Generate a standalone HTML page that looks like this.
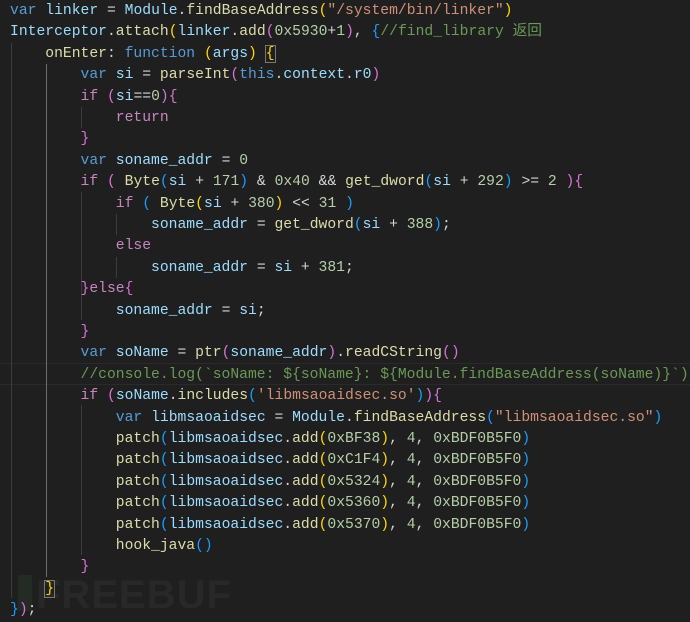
<!DOCTYPE html>
<html><head><meta charset="utf-8"><style>
html,body{margin:0;padding:0;}
body{width:690px;height:618px;background:#1f1f1f;overflow:hidden;position:relative;
font-family:"Liberation Mono","Noto Sans CJK SC",monospace;font-size:14.7px;color:#d4d4d4;}
.l{position:absolute;left:10px;height:21.4px;line-height:21.4px;white-space:pre;margin-top:1px}
.k{color:#569cd6}.c{color:#c586c0}.v{color:#9cdcfe}.f{color:#dcdcaa}.s{color:#ce9178}
.n{color:#b5cea8}.g{color:#6a9955}.y{color:#ffd700}.p{color:#da70d6}.b{color:#179fff}.w{color:#d4d4d4}
.ig{position:absolute;width:1px;background:#3c3c3c}
</style></head><body>
<div style="position:absolute;left:0;top:363px;width:690px;height:20px;border-top:1px solid #2a2a2a;border-bottom:1px solid #2a2a2a"></div>
<div style="position:absolute;left:36px;top:575px;font-family:'Liberation Sans',sans-serif;font-weight:bold;font-size:40px;color:#282828;letter-spacing:1px;line-height:40px">FREEBUF</div>
<div style="position:absolute;left:18px;top:575px;width:14px;height:36px;background:#242b24"></div>
<div class="ig" style="left:11px;top:43px;height:555px"></div>
<div class="ig" style="left:46px;top:64px;height:513px;background:#6e6e6e"></div>
<div class="ig" style="left:81px;top:107px;height:21px"></div>
<div class="ig" style="left:81px;top:192px;height:107px"></div>
<div class="ig" style="left:116px;top:214px;height:21px"></div>
<div class="ig" style="left:116px;top:257px;height:21px"></div>
<div class="ig" style="left:81px;top:299px;height:21px"></div>
<div class="ig" style="left:81px;top:405px;height:150px"></div>
<div class="l" style="top:0px"><span class="k">var</span> <span class="v">linker</span> = <span class="v">Module</span>.<span class="f">findBaseAddress</span><span class="y">(</span><span class="s">"/system/bin/linker"</span><span class="y">)</span></div>
<div class="l" style="top:21.4px"><span class="v">Interceptor</span>.<span class="f">attach</span><span class="y">(</span><span class="v">linker</span>.<span class="f">add</span><span class="p">(</span><span class="n">0x5930</span>+<span class="n">1</span><span class="p">)</span>, <span class="b">{</span><span class="g">//find_library 返回</span></div>
<div class="l" style="top:42.8px">    <span class="f">onEnter</span>: <span class="k">function</span> <span class="y">(</span><span class="v">args</span><span class="y">)</span> <span class="y" style="outline:1px solid #777">{</span></div>
<div class="l" style="top:64.2px">        <span class="k">var</span> <span class="v">si</span> = <span class="f">parseInt</span><span class="p">(</span><span class="k">this</span>.<span class="v">context</span>.<span class="v">r0</span><span class="p">)</span></div>
<div class="l" style="top:85.6px">        <span class="c">if</span> <span class="p">(</span><span class="v">si</span>==<span class="n">0</span><span class="p">){</span></div>
<div class="l" style="top:107px">            <span class="c">return</span></div>
<div class="l" style="top:128.4px">        <span class="p">}</span></div>
<div class="l" style="top:149.8px">        <span class="k">var</span> <span class="v">soname_addr</span> = <span class="n">0</span></div>
<div class="l" style="top:171.2px">        <span class="c">if</span> <span class="p">(</span> <span class="f">Byte</span><span class="b">(</span><span class="v">si</span> + <span class="n">171</span><span class="b">)</span> &amp; <span class="n">0x40</span> &amp;&amp; <span class="f">get_dword</span><span class="b">(</span><span class="v">si</span> + <span class="n">292</span><span class="b">)</span> &gt;= <span class="n">2</span> <span class="p">){</span></div>
<div class="l" style="top:192.6px">            <span class="c">if</span> <span class="b">(</span> <span class="f">Byte</span><span class="y">(</span><span class="v">si</span> + <span class="n">380</span><span class="y">)</span> &lt;&lt; <span class="n">31</span> <span class="b">)</span></div>
<div class="l" style="top:214px">                <span class="v">soname_addr</span> = <span class="f">get_dword</span><span class="b">(</span><span class="v">si</span> + <span class="n">388</span><span class="b">)</span>;</div>
<div class="l" style="top:235.4px">            <span class="c">else</span></div>
<div class="l" style="top:256.8px">                <span class="v">soname_addr</span> = <span class="v">si</span> + <span class="n">381</span>;</div>
<div class="l" style="top:278.2px">        <span class="p">}</span><span class="c">else</span><span class="p">{</span></div>
<div class="l" style="top:299.6px">            <span class="v">soname_addr</span> = <span class="v">si</span>;</div>
<div class="l" style="top:321px">        <span class="p">}</span></div>
<div class="l" style="top:342.4px">        <span class="k">var</span> <span class="v">soName</span> = <span class="f">ptr</span><span class="p">(</span><span class="v">soname_addr</span><span class="p">)</span>.<span class="f">readCString</span><span class="p">()</span></div>
<div class="l" style="top:363.8px">        <span class="g">//console.log(`soName: ${soName}: ${Module.findBaseAddress(soName)}`)</span></div>
<div class="l" style="top:385.2px">        <span class="c">if</span> <span class="p">(</span><span class="v">soName</span>.<span class="f">includes</span><span class="b">(</span><span class="s">'libmsaoaidsec.so'</span><span class="b">)</span><span class="p">){</span></div>
<div class="l" style="top:406.6px">            <span class="k">var</span> <span class="v">libmsaoaidsec</span> = <span class="v">Module</span>.<span class="f">findBaseAddress</span><span class="b">(</span><span class="s">"libmsaoaidsec.so"</span><span class="b">)</span></div>
<div class="l" style="top:428px">            <span class="f">patch</span><span class="b">(</span><span class="v">libmsaoaidsec</span>.<span class="f">add</span><span class="y">(</span><span class="n">0xBF38</span><span class="y">)</span>, <span class="n">4</span>, <span class="n">0xBDF0B5F0</span><span class="b">)</span></div>
<div class="l" style="top:449.4px">            <span class="f">patch</span><span class="b">(</span><span class="v">libmsaoaidsec</span>.<span class="f">add</span><span class="y">(</span><span class="n">0xC1F4</span><span class="y">)</span>, <span class="n">4</span>, <span class="n">0xBDF0B5F0</span><span class="b">)</span></div>
<div class="l" style="top:470.8px">            <span class="f">patch</span><span class="b">(</span><span class="v">libmsaoaidsec</span>.<span class="f">add</span><span class="y">(</span><span class="n">0x5324</span><span class="y">)</span>, <span class="n">4</span>, <span class="n">0xBDF0B5F0</span><span class="b">)</span></div>
<div class="l" style="top:492.2px">            <span class="f">patch</span><span class="b">(</span><span class="v">libmsaoaidsec</span>.<span class="f">add</span><span class="y">(</span><span class="n">0x5360</span><span class="y">)</span>, <span class="n">4</span>, <span class="n">0xBDF0B5F0</span><span class="b">)</span></div>
<div class="l" style="top:513.6px">            <span class="f">patch</span><span class="b">(</span><span class="v">libmsaoaidsec</span>.<span class="f">add</span><span class="y">(</span><span class="n">0x5370</span><span class="y">)</span>, <span class="n">4</span>, <span class="n">0xBDF0B5F0</span><span class="b">)</span></div>
<div class="l" style="top:535px">            <span class="f">hook_java</span><span class="b">()</span></div>
<div class="l" style="top:556.4px">        <span class="p">}</span></div>
<div class="l" style="top:577.8px">    <span class="y" style="outline:1px solid #777">}</span></div>
<div class="l" style="top:599.2px"><span class="b">}</span><span class="p">)</span>;</div>
</body></html>
